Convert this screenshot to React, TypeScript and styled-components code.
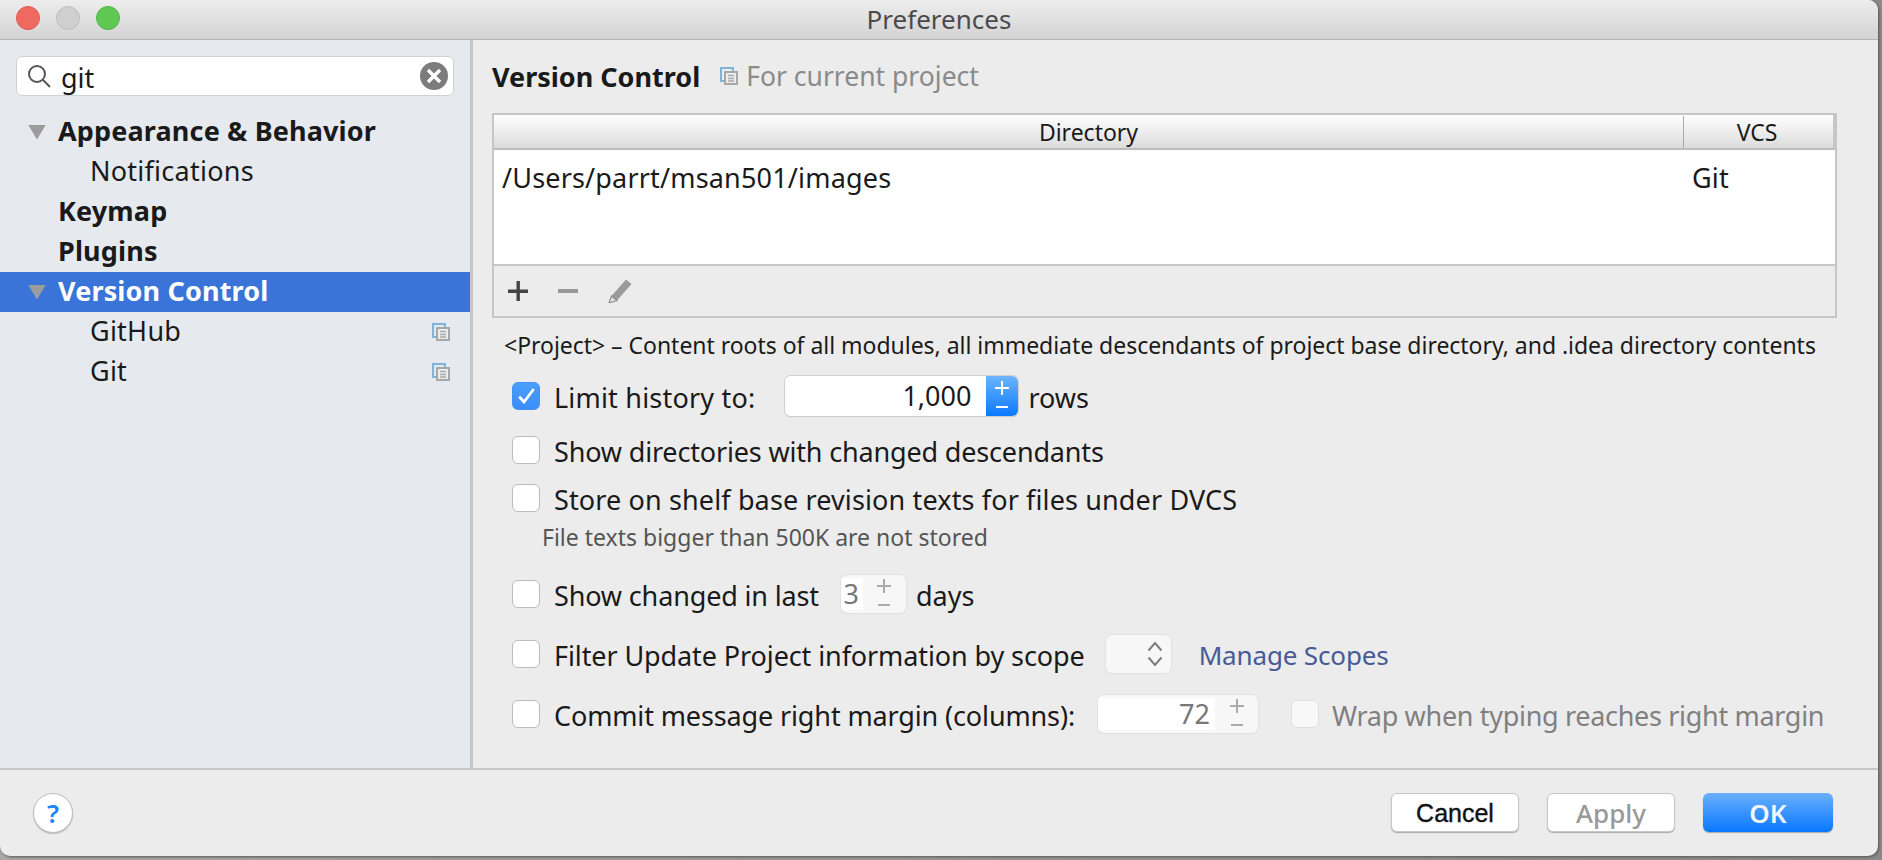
import React from "react";
import styled, { createGlobalStyle } from "styled-components";

const FONT = `"Noto Sans", "Open Sans", sans-serif`;

const GlobalStyle = createGlobalStyle`
  html, body {
    margin: 0;
    padding: 0;
    height: 860px;
    overflow: hidden;
    background: linear-gradient(90deg, #aaa, #8a8a8a);
    font-family: ${FONT};
    color: #1a1a1a;
  }
  * { box-sizing: border-box; }
`;

const Window = styled.div`
  display: flex;
  flex-direction: column;
  width: 1878px;
  height: 856px;
  background: #ececec;
  border-radius: 0 10px 10px 10px;
  box-shadow: 1px 1px 3px #555;
  overflow: hidden;
`;

const TitleBar = styled.header`
  position: relative;
  display: flex;
  align-items: center;
  justify-content: center;
  flex: none;
  height: 40px;
  padding-bottom: 2px;
  background: linear-gradient(#ededed, #d3d3d3);
  border-bottom: 1px solid #b5b5b5;
  font-size: 26px;
  color: #4a4a4a;
`;

const Lights = styled.div`
  position: absolute;
  left: 16px;
  top: 6px;
  display: flex;
  gap: 16px;
`;

const Light = styled.span<{ $color: string; $edge: string }>`
  width: 24px;
  height: 24px;
  border-radius: 50%;
  background: ${(p) => p.$color};
  border: 1px solid ${(p) => p.$edge};
`;

const Body = styled.div`
  display: flex;
  flex: 1;
  min-height: 0;
`;

const Sidebar = styled.nav`
  flex: none;
  width: 473px;
  padding-top: 16px;
  background: #e6eaef;
  border-right: 3px solid #c6c6c6;
`;

const SearchBox = styled.div`
  display: flex;
  align-items: center;
  width: 438px;
  height: 40px;
  margin-left: 16px;
  padding: 0 5px 0 10px;
  background: #fff;
  border: 1px solid #d2d2d2;
  border-radius: 6px;
`;

const SearchText = styled.span`
  flex: 1;
  margin-left: 10px;
  padding-top: 4px;
  font-size: 27px;
  line-height: 34px;
`;

const ClearButton = styled.span`
  display: flex;
  align-items: center;
  justify-content: center;
  width: 28px;
  height: 28px;
  border-radius: 50%;
  background: #7c7c7c;
`;

const Tree = styled.div`
  margin-top: 16px;
`;

const TreeRow = styled.div<{ $child?: boolean; $selected?: boolean }>`
  display: flex;
  align-items: center;
  height: 40px;
  padding: 0 20px 0 ${(p) => (p.$child ? 90 : 28)}px;
  background: ${(p) => (p.$selected ? "#3b74d8" : "transparent")};
  color: ${(p) => (p.$selected ? "#fff" : "#1a1a1a")};
`;

const Arrow = styled.span<{ $hidden?: boolean }>`
  flex: none;
  width: 18px;
  height: 15px;
  margin-right: 12px;
  background: ${(p) => (p.$hidden ? "transparent" : "#9c9c9c")};
  clip-path: polygon(0 0, 100% 0, 50% 100%);
`;

const TreeLabel = styled.span<{ $bold?: boolean }>`
  flex: 1;
  margin-top: -4px;
  font-size: 27px;
  font-weight: ${(p) => (p.$bold ? 700 : 400)};
  letter-spacing: ${(p) => (p.$bold ? "0.15px" : "0.25px")};
`;

const Panel = styled.main`
  flex: 1;
  min-width: 0;
  padding: 18px 41px 0 19px;
`;

const Heading = styled.div`
  display: flex;
  align-items: center;
  height: 36px;
`;

const HeadingTitle = styled.h1`
  margin: 0 20px 0 0;
  font-size: 27px;
  font-weight: 700;
`;

const HeadingNote = styled.span`
  margin-left: 8px;
  font-size: 26.500px;
  color: #8a8a8a;
`;

const Table = styled.section`
  margin-top: 19px;
  height: 205px;
  border: 2px solid #c6c6c6;
  display: flex;
  flex-direction: column;
`;

const TableHead = styled.div`
  display: grid;
  grid-template-columns: 1fr 147px;
  flex: none;
  height: 35px;
  padding: 1px 3px 0 0;
  background: linear-gradient(#fff, #dcdcdc);
  border-bottom: 2px solid #bdbdbd;
  border-right: 2px solid #c6c6c6;
`;

const HeadCell = styled.div<{ $divider?: boolean }>`
  display: flex;
  align-items: center;
  justify-content: center;
  font-size: 23px;
  border-left: ${(p) => (p.$divider ? "1px solid #aaa" : "none")};
  margin-bottom: 2px;
`;

const TableBody = styled.div`
  display: grid;
  grid-template-columns: 1fr 143px;
  grid-auto-rows: 54px;
  flex: 1;
  padding-left: 8px;
  background: #fff;
  border-bottom: 2px solid #c6c6c6;
`;

const BodyCell = styled.div`
  display: flex;
  align-items: center;
  font-size: 27px;
  letter-spacing: 0.18px;
`;

const ToolStrip = styled.div`
  display: flex;
  align-items: center;
  gap: 30px;
  flex: none;
  height: 50px;
  padding-left: 14px;
`;

const Hint = styled.p`
  height: 30px;
  margin: 12px 0 0 12px;
  font-size: 23px;
  letter-spacing: -0.03px;
  line-height: 30px;
  white-space: nowrap;
`;

const Option = styled.div<{ $top: number }>`
  display: flex;
  align-items: center;
  height: 40px;
  margin-top: ${(p) => p.$top}px;
  padding-left: 20px;
`;

const Check = styled.span<{ $checked?: boolean; $disabled?: boolean; $left?: number }>`
  display: flex;
  align-items: center;
  justify-content: center;
  flex: none;
  width: 28px;
  height: 28px;
  margin-left: ${(p) => p.$left ?? 0}px;
  border-radius: 6px;
  background: ${(p) =>
    p.$checked ? "linear-gradient(#4a9ffb, #3a8df8)" : p.$disabled ? "#f8f8f8" : "#fff"};
  border: 1px solid ${(p) => (p.$checked ? "#3f93f8" : p.$disabled ? "#e0e0e0" : "#bcbcbc")};
`;

const Label = styled.span<{ $left?: number; $muted?: boolean; $spacing?: number }>`
  margin-left: ${(p) => p.$left ?? 14}px;
  padding-top: 2px;
  font-size: 27px;
  letter-spacing: ${(p) => p.$spacing ?? 0}px;
  white-space: nowrap;
  color: ${(p) => (p.$muted ? "#808080" : "#1a1a1a")};
`;

const Note = styled.p`
  height: 30px;
  margin: 4px 0 0 50px;
  font-size: 23px;
  line-height: 30px;
  color: #555;
`;

const LinkText = styled.a`
  margin-left: 28px;
  padding-top: 2px;
  font-size: 26px;
  letter-spacing: -0.15px;
  color: #475a96;
`;

const Spinner = styled.div<{ $width: number; $active?: boolean; $left: number }>`
  display: flex;
  flex: none;
  width: ${(p) => p.$width}px;
  height: ${(p) => (p.$active ? 40 : 38)}px;
  margin-left: ${(p) => p.$left}px;
  border-radius: 6px;
  overflow: hidden;
  background: ${(p) => (p.$active ? "#fff" : "#f7f7f7")};
  box-shadow: ${(p) =>
    p.$active ? "0 0 0 1px #d0d0d0, 0 1px 1px #aaa" : "0 0 0 1px #e2e2e2, 0 1px 1px #d4d4d4"};
`;

const SpinValue = styled.span<{ $active?: boolean; $width: number; $pad: number }>`
  flex: none;
  width: ${(p) => p.$width}px;
  margin: ${(p) => (p.$active ? 0 : 3)}px 0;
  padding-right: ${(p) => p.$pad}px;
  font-size: 27px;
  line-height: ${(p) => (p.$active ? 40 : 32)}px;
  text-align: right;
  background: #fff;
  color: ${(p) => (p.$active ? "#1a1a1a" : "#777")};
`;

const SpinSteps = styled.span<{ $active?: boolean }>`
  display: flex;
  align-items: center;
  justify-content: center;
  flex: 1;
  background: ${(p) => (p.$active ? "linear-gradient(#6db4fd, #0a78ff)" : "transparent")};
`;

const Combo = styled.div`
  display: flex;
  align-items: center;
  justify-content: flex-end;
  flex: none;
  width: 65px;
  height: 38px;
  margin-left: 21px;
  padding-right: 8px;
  border-radius: 6px;
  background: #f7f7f7;
  box-shadow: 0 0 0 1px #e2e2e2, 0 1px 1px #d4d4d4;
`;

const Footer = styled.footer`
  display: flex;
  align-items: flex-start;
  flex: none;
  height: 88px;
  padding: 23px 45px 0 33px;
  border-top: 2px solid #c6c6c6;
`;

const HelpButton = styled.span`
  display: flex;
  align-items: center;
  justify-content: center;
  width: 40px;
  height: 40px;
  border-radius: 50%;
  background: #fff;
  border: 1px solid #bdbdbd;
  box-shadow: 0 1px 1px #bbb;
  color: #1a84ff;
  font-size: 26px;
  font-weight: 600;
`;

const ButtonRow = styled.div`
  display: flex;
  gap: 28px;
  margin-left: auto;
`;

const Button = styled.button<{ $variant?: "primary" | "disabled" }>`
  width: ${(p) => (p.$variant === "primary" ? 130 : 128)}px;
  height: 39px;
  padding: ${(p) => (p.$variant ? "0" : "2px 0 0")};
  border-radius: 6px;
  font-family: ${(p) => (p.$variant ? FONT : `"Liberation Sans", sans-serif`)};
  font-size: ${(p) => (p.$variant ? 26 : 25)}px;
  font-weight: ${(p) => (p.$variant === "primary" ? 600 : 500)};
  -webkit-text-stroke: ${(p) => (p.$variant ? 0 : 0.4)}px;
  color: ${(p) =>
    p.$variant === "primary" ? "#f1f6ff" : p.$variant === "disabled" ? "#999" : "#111"};
  background: ${(p) =>
    p.$variant === "primary" ? "linear-gradient(#69b0fd, #0a78ff)" : "#fff"};
  border: ${(p) => (p.$variant === "primary" ? "none" : "1px solid #c8c8c8")};
  box-shadow: 0 1px 1px #aaa;
`;

const ScopeIcon = () => (
  <svg width="18" height="18" viewBox="0 0 18 18" fill="none">
    <path d="M1 13V1h12v3" stroke="#7fb3d8" strokeWidth="2" />
    <path d="M1 13v1h3" stroke="#7fb3d8" strokeWidth="2" />
    <rect x="5" y="5" width="12" height="12" fill="#ececec" stroke="#a8a8a8" strokeWidth="2" />
    <path d="M8 8.5h6M8 11.5h6M8 14h6" stroke="#a8a8a8" strokeWidth="1.5" />
  </svg>
);

const SearchIcon = () => (
  <svg width="24" height="24" viewBox="0 0 24 24" fill="none" stroke="#555" strokeWidth="2">
    <circle cx="10" cy="10" r="8" />
    <path d="M16 16l7 7" />
  </svg>
);

const CloseIcon = () => (
  <svg width="16" height="16" viewBox="0 0 16 16" stroke="#fff" strokeWidth="3.4">
    <path d="M2 2l12 12M14 2L2 14" />
  </svg>
);

const PlusIcon = () => (
  <svg width="20" height="20" viewBox="0 0 20 20" fill="#444">
    <path d="M8.5 0h3.4v8.500H20v3.400h-8.100V20H8.500v-8.100H0V8.500h8.500z" />
  </svg>
);

const MinusIcon = () => (
  <svg width="20" height="20" viewBox="0 0 20 20" fill="#999">
    <rect y="8" width="20" height="4" />
  </svg>
);

const PencilIcon = () => (
  <svg width="24" height="24" viewBox="0 0 24 24">
    <path d="M18 0.500l5.500 4.500L9 21.500 3.500 17z" fill="#9a9a9a" />
    <path d="M3.500 17L9 21.500 1 24z" fill="#e4e4e4" stroke="#8c8c8c" strokeWidth="1.200" />
  </svg>
);

const CheckMark = () => (
  <svg width="17" height="16" viewBox="0 0 17 16" fill="none" stroke="#fff" strokeWidth="2.800" strokeLinecap="round">
    <path d="M2 9.500l4 4.500L15 2" />
  </svg>
);

const StepIcon = ({ color }: { color: string }) => (
  <svg width="14" height="30" viewBox="0 0 14 30" stroke={color} strokeWidth="2" fill="none">
    <path d="M0 7h14M7 0v14M1 26h12" />
  </svg>
);

const ChevronsIcon = () => (
  <svg width="16" height="26" viewBox="0 0 16 26" fill="none" stroke="#7d7d7d" strokeWidth="2">
    <path d="M1.500 9.500L8 2l6.500 7.500M1.500 16.500L8 24l6.500-7.500" />
  </svg>
);

const tree = [
  { label: "Appearance & Behavior", arrow: true },
  { label: "Notifications", child: true },
  { label: "Keymap", arrow: false },
  { label: "Plugins", arrow: false },
  { label: "Version Control", arrow: true, selected: true },
  { label: "GitHub", child: true, scoped: true },
  { label: "Git", child: true, scoped: true },
];

export default function App() {
  return (
    <>
      <GlobalStyle />
      <Window>
        <TitleBar>
          <Lights>
            <Light $color="#f0695f" $edge="#e0554c" />
            <Light $color="#cfcfcf" $edge="#bdbdbd" />
            <Light $color="#5fc853" $edge="#4fb544" />
          </Lights>
          Preferences
        </TitleBar>
        <Body>
          <Sidebar>
            <SearchBox>
              <SearchIcon />
              <SearchText>git</SearchText>
              <ClearButton>
                <CloseIcon />
              </ClearButton>
            </SearchBox>
            <Tree>
              {tree.map((row) => (
                <TreeRow key={row.label} $child={row.child} $selected={row.selected}>
                  {!row.child && <Arrow $hidden={!row.arrow} />}
                  <TreeLabel $bold={!row.child}>{row.label}</TreeLabel>
                  {row.scoped && <ScopeIcon />}
                </TreeRow>
              ))}
            </Tree>
          </Sidebar>
          <Panel>
            <Heading>
              <HeadingTitle>Version Control</HeadingTitle>
              <ScopeIcon />
              <HeadingNote>For current project</HeadingNote>
            </Heading>
            <Table>
              <TableHead>
                <HeadCell>Directory</HeadCell>
                <HeadCell $divider>VCS</HeadCell>
              </TableHead>
              <TableBody>
                <BodyCell>/Users/parrt/msan501/images</BodyCell>
                <BodyCell>Git</BodyCell>
              </TableBody>
              <ToolStrip>
                <PlusIcon />
                <MinusIcon />
                <PencilIcon />
              </ToolStrip>
            </Table>
            <Hint>
              &lt;Project&gt; – Content roots of all modules, all immediate descendants of project base
              directory, and .idea directory contents
            </Hint>
            <Option $top={16}>
              <Check $checked>
                <CheckMark />
              </Check>
              <Label $spacing={0.2}>Limit history to:</Label>
              <Spinner $width={233} $left={30} $active>
                <SpinValue $active $width={201} $pad={15}>
                  1,000
                </SpinValue>
                <SpinSteps $active>
                  <StepIcon color="#fff" />
                </SpinSteps>
              </Spinner>
              <Label $left={10}>rows</Label>
            </Option>
            <Option $top={14}>
              <Check />
              <Label $spacing={-0.17}>Show directories with changed descendants</Label>
            </Option>
            <Option $top={8}>
              <Check />
              <Label $spacing={0.13}>Store on shelf base revision texts for files under DVCS</Label>
            </Option>
            <Note>File texts bigger than 500K are not stored</Note>
            <Option $top={22}>
              <Check />
              <Label $spacing={-0.15}>Show changed in last</Label>
              <Spinner $width={65} $left={22}>
                <SpinValue $width={22} $pad={4}>
                  3
                </SpinValue>
                <SpinSteps>
                  <StepIcon color="#aaa" />
                </SpinSteps>
              </Spinner>
              <Label $left={10}>days</Label>
            </Option>
            <Option $top={20}>
              <Check />
              <Label $spacing={-0.1}>Filter Update Project information by scope</Label>
              <Combo>
                <ChevronsIcon />
              </Combo>
              <LinkText>Manage Scopes</LinkText>
            </Option>
            <Option $top={20}>
              <Check />
              <Label $spacing={-0.13}>Commit message right margin (columns):</Label>
              <Spinner $width={160} $left={23}>
                <SpinValue $width={117} $pad={5}>
                  72
                </SpinValue>
                <SpinSteps>
                  <StepIcon color="#aaa" />
                </SpinSteps>
              </Spinner>
              <Check $disabled $left={33} />
              <Label $left={13} $muted $spacing={-0.32}>
                Wrap when typing reaches right margin
              </Label>
            </Option>
          </Panel>
        </Body>
        <Footer>
          <HelpButton>?</HelpButton>
          <ButtonRow>
            <Button>Cancel</Button>
            <Button $variant="disabled">Apply</Button>
            <Button $variant="primary">OK</Button>
          </ButtonRow>
        </Footer>
      </Window>
    </>
  );
}
